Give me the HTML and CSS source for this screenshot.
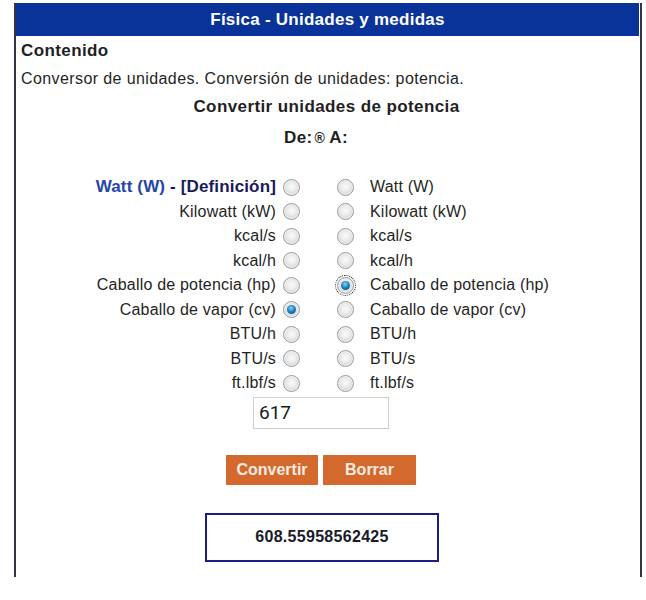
FILE: index.html
```html
<!DOCTYPE html>
<html lang="es">
<head>
<meta charset="utf-8">
<title>Física - Unidades y medidas</title>
<link rel="stylesheet" href="styles.css">
</head>
<body>
<div class="frame">
  <div class="header">Física - Unidades y medidas</div>
  <div class="content">
    <h2 class="title">Contenido</h2>
    <p class="intro">Conversor de unidades. Conversión de unidades: potencia.</p>
    <h3 class="subtitle">Convertir unidades de potencia</h3>
    <p class="dea">De:<span class="mini">&reg;</span>A:</p>
    <div class="grid">
      <div class="lab-l first"><span class="link">Watt (W)</span> - [Definición]</div>
      <span class="radio"></span><span class="radio r2"></span>
      <div class="lab-r">Watt (W)</div>

      <div class="lab-l">Kilowatt (kW)</div>
      <span class="radio"></span><span class="radio r2"></span>
      <div class="lab-r">Kilowatt (kW)</div>

      <div class="lab-l">kcal/s</div>
      <span class="radio"></span><span class="radio r2"></span>
      <div class="lab-r">kcal/s</div>

      <div class="lab-l">kcal/h</div>
      <span class="radio"></span><span class="radio r2"></span>
      <div class="lab-r">kcal/h</div>

      <div class="lab-l">Caballo de potencia (hp)</div>
      <span class="radio"></span><span class="radio r2 checked focus"></span>
      <div class="lab-r">Caballo de potencia (hp)</div>

      <div class="lab-l">Caballo de vapor (cv)</div>
      <span class="radio checked"></span><span class="radio r2"></span>
      <div class="lab-r">Caballo de vapor (cv)</div>

      <div class="lab-l">BTU/h</div>
      <span class="radio"></span><span class="radio r2"></span>
      <div class="lab-r">BTU/h</div>

      <div class="lab-l">BTU/s</div>
      <span class="radio"></span><span class="radio r2"></span>
      <div class="lab-r">BTU/s</div>

      <div class="lab-l">ft.lbf/s</div>
      <span class="radio"></span><span class="radio r2"></span>
      <div class="lab-r">ft.lbf/s</div>
    </div>
    <div class="input-row"><div class="input">617</div></div>
    <div class="buttons">
      <span class="btn b1">Convertir</span>
      <span class="btn b2">Borrar</span>
    </div>
    <div class="result-row"><div class="result">608.55958562425</div></div>
  </div>
</div>
</body>
</html>
```

FILE: styles.css
```css
html, body {
  margin: 0;
  padding: 0;
  background: #ffffff;
}
body {
  font-family: "Liberation Sans", Arial, sans-serif;
  color: #1f1f24;
  font-size: 16px;
}
.frame {
  margin: 3px 0 0 14px;
  width: 624px;
  height: 574px;
  border-left: 2px solid #33334a;
  border-right: 2px solid #33334a;
}
.header {
  height: 33px;
  margin-right: 1px;
  background: #0a3399;
  color: #ffffff;
  font-weight: bold;
  font-size: 17px;
  letter-spacing: 0.25px;
  display: flex;
  align-items: center;
  justify-content: center;
}
.content {
  padding-left: 5px;
}
.title {
  margin: 0;
  padding-top: 5px;
  font-size: 17px;
  letter-spacing: 0.4px;
  line-height: 19px;
  font-weight: bold;
}
.intro {
  margin: 0;
  padding-top: 9px;
  line-height: 19px;
  font-size: 16px;
  letter-spacing: 0.4px;
}
.subtitle {
  margin: 0;
  padding-top: 9px;
  line-height: 19px;
  font-size: 17px;
  letter-spacing: 0.4px;
  font-weight: bold;
  text-align: center;
  padding-right: 8px;
}
.dea {
  margin: 0;
  padding-top: 12px;
  line-height: 19px;
  font-size: 17px;
  letter-spacing: 0.4px;
  font-weight: bold;
  text-align: center;
  padding-right: 29px;
}
.mini {
  font-size: 14px;
  margin: 0 4px 0 2px;
}
.grid {
  margin-top: 27px;
  margin-left: -5px;
  display: grid;
  grid-template-columns: 265px 20px 55px 1fr;
  grid-auto-rows: 24.5px;
  align-items: center;
}
.lab-l, .lab-r {
  font-size: 16px;
  letter-spacing: 0.2px;
  white-space: nowrap;
}
.lab-l {
  text-align: right;
  padding-right: 5px;
}
.lab-r {
  padding-left: 14px;
}
.first {
  font-weight: bold;
  font-size: 17px;
  letter-spacing: 0.15px;
  color: #1a1a5a;
}
.link {
  color: #2645a8;
}
.radio {
  width: 15px;
  height: 15px;
  border-radius: 50%;
  border: 1px solid #9a9a9a;
  background: radial-gradient(circle at 50% 45%, #fafafa 0%, #ececec 40%, #cfcfcf 75%, #bdbdbd 100%);
  justify-self: center;
  box-shadow: inset 0 0 0 1px #f4f4f4;
  position: relative;
}
.r2 {
  justify-self: end;
  margin-right: 2px;
}
.radio.checked::after {
  content: "";
  position: absolute;
  left: 3px;
  top: 3px;
  width: 9px;
  height: 9px;
  border-radius: 50%;
  background: radial-gradient(circle at 45% 35%, #8ad6f4 0%, #1d86c0 45%, #0b3f6a 100%);
}
.radio.focus {
  outline: 1px dotted #111111;
  outline-offset: 1px;
}
.input-row {
  display: flex;
  padding-left: 232px;
  margin-top: 1px;
}
.input {
  width: 129px;
  height: 30px;
  border: 1px solid #cfcfcf;
  font-family: Roboto, "Liberation Sans", sans-serif;
  font-size: 19px;
  line-height: 30px;
  padding-left: 5px;
  color: #1a1a1a;
}
.buttons {
  display: flex;
  gap: 5px;
  padding-left: 205px;
  margin-top: 26px;
}
.btn {
  height: 30px;
  background: #d3692d;
  color: #f6ebe0;
  font-weight: bold;
  font-size: 16px;
  display: flex;
  align-items: center;
  justify-content: center;
}
.b1 { width: 92px; }
.b2 { width: 93px; }
.result-row {
  display: flex;
  padding-left: 184px;
  margin-top: 28px;
}
.result {
  width: 230px;
  height: 45px;
  border: 2px solid #1c1c84;
  display: flex;
  align-items: center;
  justify-content: center;
  font-weight: bold;
  font-size: 16px;
  letter-spacing: 0.3px;
  color: #1a1a2a;
}
```
